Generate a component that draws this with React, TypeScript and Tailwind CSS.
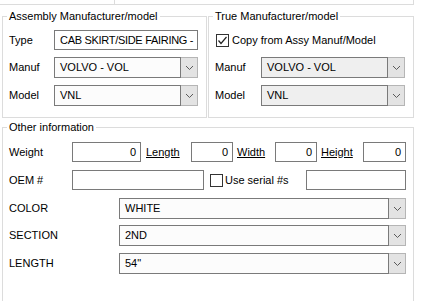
import React from 'react';

const GROUP = 'border border-[#dcdcdc] px-[4px] m-0 min-w-0';
const LEGEND = 'px-[2px] leading-[15px]';

function Chevron() {
  return (
    <svg width="9" height="6" viewBox="0 0 9 6" className="block">
      <polyline points="1,1 4.5,4.5 8,1" fill="none" stroke="#5a5a5a" strokeWidth="1" />
    </svg>
  );
}

function Combo({ value, disabled, className }: { value: string; disabled?: boolean; className: string }) {
  return (
    <div className={`flex ${className}`}>
      <div
        className={`flex-1 flex items-center pl-[5px] border border-[#7a7a7a] whitespace-nowrap overflow-hidden ${
          disabled ? 'bg-[#efefef]' : 'bg-[#fcfcfc]'
        }`}
      >
        {value}
      </div>
      <div className="w-[17px] flex items-center justify-center bg-[#e3e3e3] border border-l-0 border-[#b5b5b5]">
        <Chevron />
      </div>
    </div>
  );
}

function TextBox({ value = '', right, className }: { value?: string; right?: boolean; className: string }) {
  return (
    <div
      className={`flex items-center border border-[#7a7a7a] bg-white whitespace-nowrap overflow-hidden ${
        right ? 'justify-end pr-[4px]' : 'pl-[5px]'
      } ${className}`}
    >
      {value}
    </div>
  );
}

function CheckBox({ checked }: { checked?: boolean }) {
  return (
    <div className="w-[13px] h-[13px] border border-[#333333] bg-white flex items-center justify-center shrink-0">
      {checked && (
        <svg width="11" height="11" viewBox="0 0 11 11" className="block">
          <polyline points="1.5,5.5 4,8.5 9.5,2" fill="none" stroke="#222" strokeWidth="1.2" />
        </svg>
      )}
    </div>
  );
}

export default function App() {
  return (
    <div className="w-[447px] h-[301px] overflow-hidden bg-white text-black text-[11px] font-['Liberation_Sans',Arial,sans-serif]">
      {/* tail of the group above */}
      <div className="flex h-[5px] w-[414px] border-b border-r border-[#dcdcdc]">
        <div className="w-[114px]" />
        <div className="flex-1 border-l border-[#dcdcdc]" />
      </div>

      <div className="flex mt-[4px] ml-[2px] gap-[1px]">
        <fieldset className={`${GROUP} w-[205px]`}>
          <legend className={LEGEND}>Assembly Manufacturer/model</legend>
          <div className="flex flex-col mt-[6px] pb-[11px]">
            <div className="flex items-center h-[20px]">
              <span className="w-[47px] pl-[2px]">Type</span>
              <TextBox value="CAB SKIRT/SIDE FAIRING -" className="w-[144px] h-[20px] tracking-[-0.3px]" />
            </div>
            <div className="flex items-center h-[21px] mt-[7px]">
              <span className="w-[47px] pl-[2px]">Manuf</span>
              <Combo value="VOLVO - VOL" className="w-[144px] h-[21px]" />
            </div>
            <div className="flex items-center h-[21px] mt-[7px]">
              <span className="w-[47px] pl-[2px]">Model</span>
              <Combo value="VNL" className="w-[144px] h-[21px]" />
            </div>
          </div>
        </fieldset>

        <fieldset className={`${GROUP} w-[206px]`}>
          <legend className={LEGEND}>True Manufacturer/model</legend>
          <div className="flex flex-col mt-[6px] pb-[11px]">
            <div className="flex items-center h-[20px] pl-[3px] gap-[3px]">
              <CheckBox checked />
              <span>Copy from Assy Manuf/Model</span>
            </div>
            <div className="flex items-center h-[21px] mt-[7px]">
              <span className="w-[48px] pl-[2px]">Manuf</span>
              <Combo value="VOLVO - VOL" disabled className="w-[144px] h-[21px]" />
            </div>
            <div className="flex items-center h-[21px] mt-[7px]">
              <span className="w-[48px] pl-[2px]">Model</span>
              <Combo value="VNL" disabled className="w-[144px] h-[21px]" />
            </div>
          </div>
        </fieldset>
      </div>

      <fieldset className={`${GROUP} w-[412px] ml-[2px] mt-[2px]`}>
        <legend className={LEGEND}>Other information</legend>
        <div className="flex flex-col mt-[7px] pb-[40px]">
          <div className="flex items-center h-[20px]">
            <span className="w-[65px] pl-[2px]">Weight</span>
            <TextBox value="0" right className="w-[69px] h-[20px]" />
            <span className="w-[50px] pl-[5px] underline">Length</span>
            <TextBox value="0" right className="w-[42px] h-[20px]" />
            <span className="w-[42px] pl-[4px] underline">Width</span>
            <TextBox value="0" right className="w-[42px] h-[20px]" />
            <span className="w-[46px] pl-[4px] underline">Height</span>
            <TextBox value="0" right className="w-[43px] h-[20px]" />
          </div>
          <div className="flex items-center h-[20px] mt-[8px]">
            <span className="w-[65px] pl-[2px]">OEM #</span>
            <TextBox className="w-[132px] h-[20px]" />
            <div className="w-[6px]" />
            <CheckBox />
            <span className="w-[83px] pl-[2px]">Use serial #s</span>
            <TextBox className="w-[100px] h-[20px]" />
          </div>
          <div className="flex items-center h-[21px] mt-[8px]">
            <span className="w-[112px] pl-[2px]">COLOR</span>
            <Combo value="WHITE" className="w-[287px] h-[21px]" />
          </div>
          <div className="flex items-center h-[21px] mt-[6px]">
            <span className="w-[112px] pl-[2px]">SECTION</span>
            <Combo value="2ND" className="w-[287px] h-[21px]" />
          </div>
          <div className="flex items-center h-[21px] mt-[7px]">
            <span className="w-[112px] pl-[2px]">LENGTH</span>
            <Combo value={'54"'} className="w-[287px] h-[21px]" />
          </div>
        </div>
      </fieldset>
    </div>
  );
}
